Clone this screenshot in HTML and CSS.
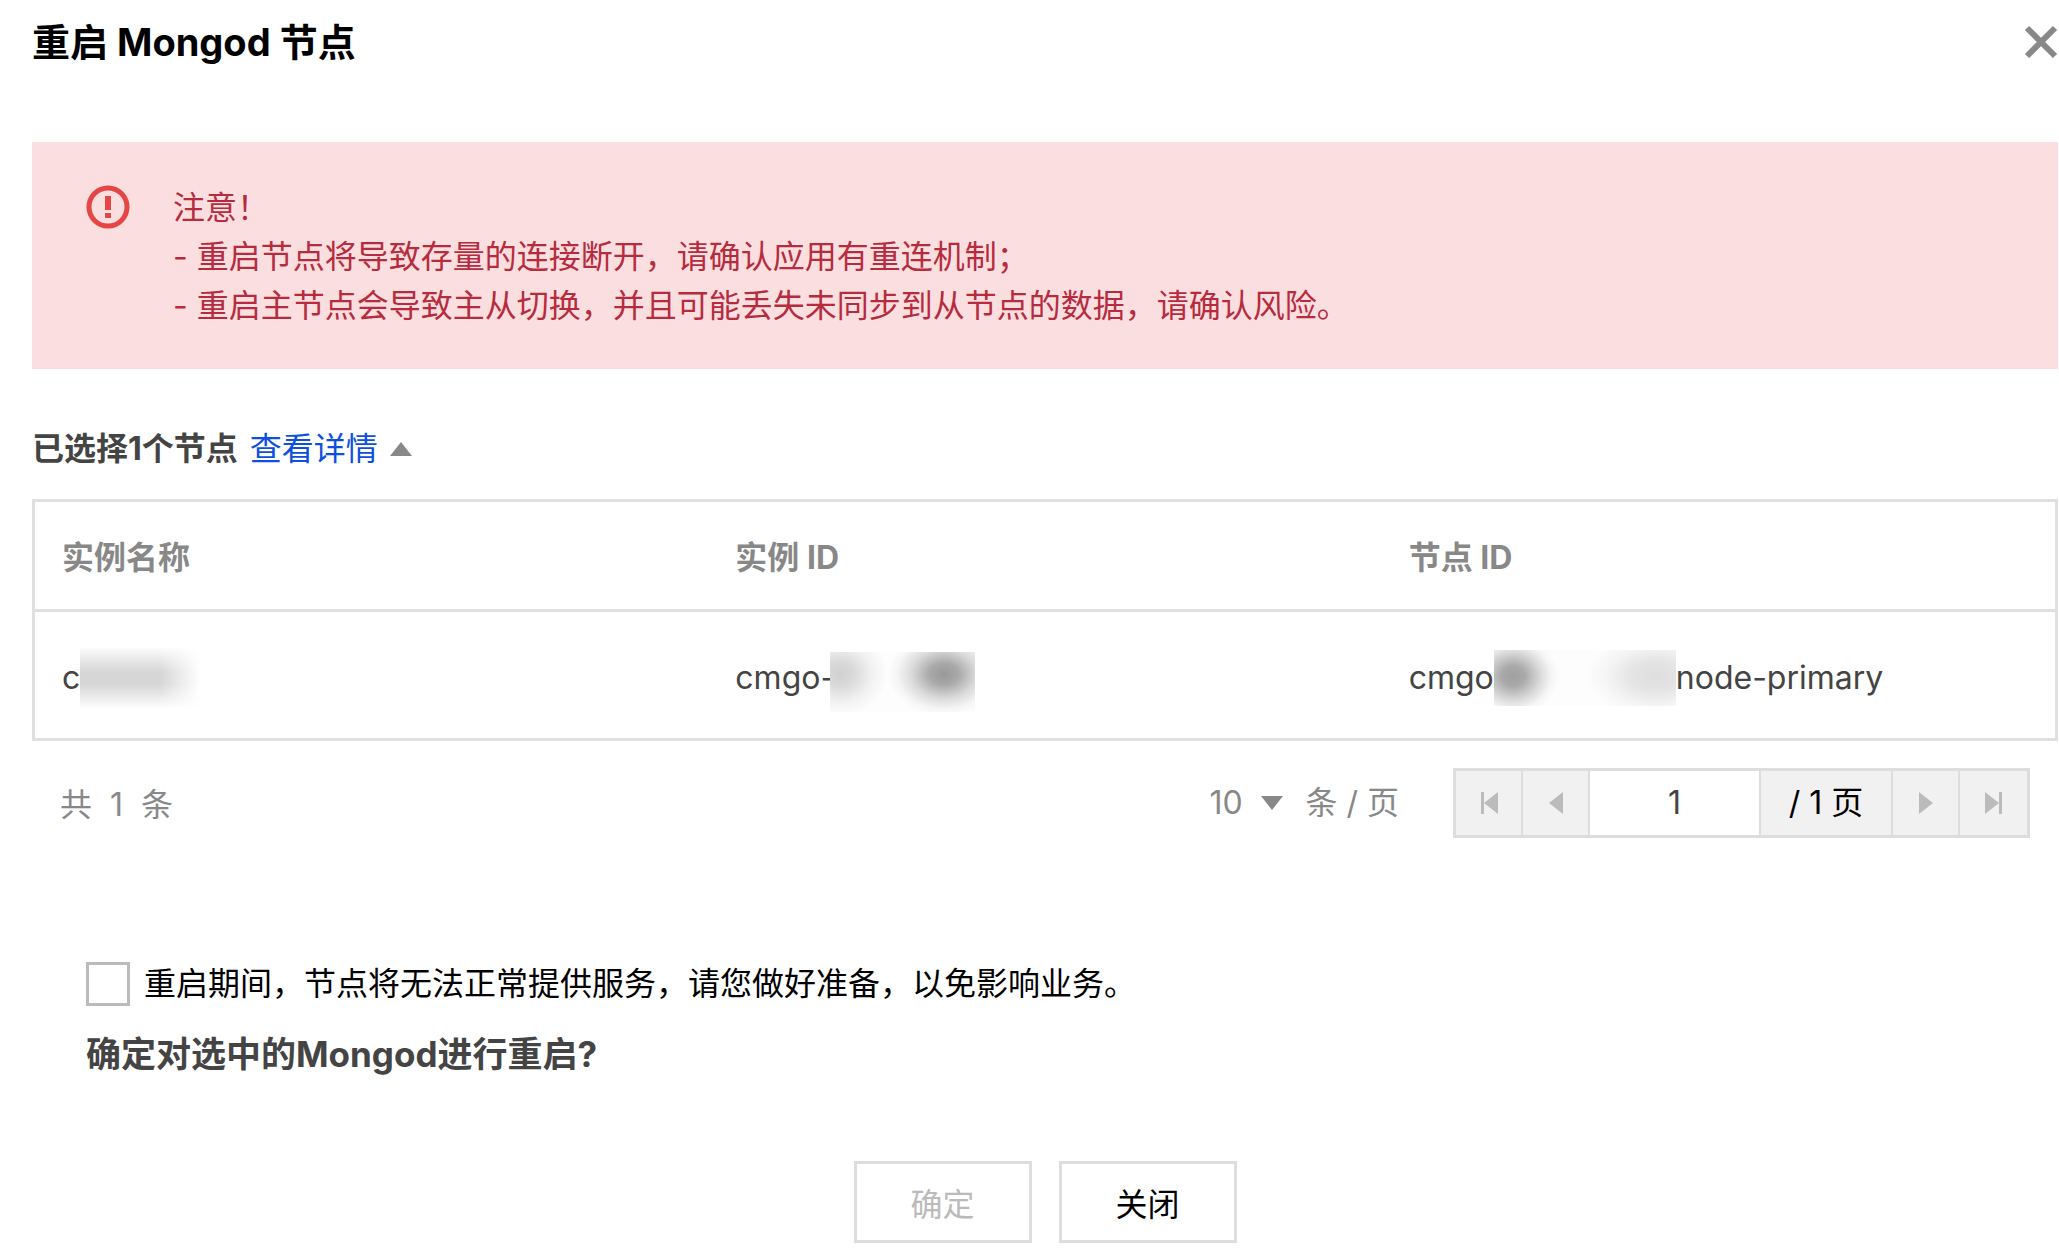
FILE: index.html
```html
<!DOCTYPE html>
<html lang="zh-CN">
<head>
    <meta charset="UTF-8">
    <meta name="viewport" content="width=device-width, initial-scale=1.0">
    <title>重启 Mongod 节点</title>
    <link rel="stylesheet" href="styles.css">
</head>
<body>
    <div class="dialog" role="dialog" aria-labelledby="dialogTitle">
        <div class="dialog-header">
            <h1 id="dialogTitle">重启 Mongod 节点</h1>
            <button class="btn-close" type="button" aria-label="关闭">
                <svg width="34" height="34" viewBox="0 0 34 34"><path d="M3 3L31 31M31 3L3 31" stroke="#888" stroke-width="6" fill="none"/></svg>
            </button>
        </div>

        <div class="alert">
            <svg class="alert-icon" width="44" height="44" viewBox="0 0 44 44">
                <circle cx="22" cy="22" r="19" fill="none" stroke="#e54545" stroke-width="5"/>
                <rect x="19" y="11" width="6" height="14" fill="#e54545"/>
                <rect x="19" y="28" width="6" height="5" fill="#e54545"/>
            </svg>
            <div>
                <p>注意！</p>
                <p>- 重启节点将导致存量的连接断开，请确认应用有重连机制；</p>
                <p>- 重启主节点会导致主从切换，并且可能丢失未同步到从节点的数据，请确认风险。</p>
            </div>
        </div>

        <div class="selected">
            <strong>已选择1个节点</strong>
            <a href="#nodeTable">查看详情</a>
            <svg width="22" height="14" viewBox="0 0 22 14"><path d="M11 0L22 14H0z" fill="#888"/></svg>
        </div>

        <table id="nodeTable">
            <thead>
                <tr>
                    <th>实例名称</th>
                    <th>实例 ID</th>
                    <th>节点 ID</th>
                </tr>
            </thead>
            <tbody>
                <tr>
                    <td><div class="cell">c<span class="mask mask-name"></span></div></td>
                    <td><div class="cell">cmgo-<span class="mask mask-instance"></span></div></td>
                    <td><div class="cell">cmgo<span class="mask mask-node"></span>node-primary</div></td>
                </tr>
            </tbody>
        </table>

        <div class="pagination">
            <div class="total">共 <span>1</span> 条</div>
            <div class="page-size">
                <select id="pageSize">
                    <option>10</option>
                    <option>20</option>
                    <option>50</option>
                </select>
                <svg width="22" height="14" viewBox="0 0 22 14"><path d="M0 0H22L11 14z" fill="#888"/></svg>
                <label for="pageSize">条 / 页</label>
            </div>
            <div class="pager">
                <button type="button" aria-label="第一页" disabled>
                    <svg width="18" height="22" viewBox="0 0 18 22"><path d="M1 0H4V22H1zM18 0V22L4 11z" fill="#bbb"/></svg>
                </button>
                <button type="button" aria-label="上一页" disabled>
                    <svg width="14" height="22" viewBox="0 0 14 22"><path d="M14 0V22L0 11z" fill="#bbb"/></svg>
                </button>
                <input type="text" value="1" aria-label="页码">
                <span class="page-count">/ 1 页</span>
                <button type="button" aria-label="下一页" disabled>
                    <svg width="14" height="22" viewBox="0 0 14 22"><path d="M0 0V22L14 11z" fill="#bbb"/></svg>
                </button>
                <button type="button" aria-label="最后一页" disabled>
                    <svg width="18" height="22" viewBox="0 0 18 22"><path d="M14 0H17V22H14zM0 0V22L14 11z" fill="#bbb"/></svg>
                </button>
            </div>
        </div>

        <div class="confirm">
            <div class="agree">
                <input type="checkbox" id="agree">
                <label for="agree">重启期间，节点将无法正常提供服务，请您做好准备，以免影响业务。</label>
            </div>
            <p class="question">确定对选中的Mongod进行重启?</p>
        </div>

        <div class="dialog-footer">
            <button class="btn" type="button" disabled>确定</button>
            <button class="btn" type="button">关闭</button>
        </div>
    </div>
</body>
</html>
```
FILE: styles.css
```css
* { box-sizing: border-box; }
body { margin: 0; background: #fff; color: #444; font-family: Inter, "Noto Sans CJK SC", sans-serif; font-size: 32px; line-height: 50px; }
h1, p { margin: 0; }
svg { display: block; flex: none; }
button, input, select { font: inherit; color: inherit; }

.dialog { padding: 0 1px 16px 32px; }
.dialog-header { display: flex; justify-content: space-between; align-items: center; height: 84px; }
.dialog-header h1 { font-size: 38px; font-weight: bold; color: #000; }
.btn-close { padding: 0; border: none; background: none; cursor: pointer; }

.alert { display: flex; gap: 43px; margin-top: 58px; padding: 41px 54px 39px; background: #fbdfe0; color: #b72b3f; line-height: 49px; }
.alert-icon { margin-top: 2px; }

.selected { display: flex; align-items: center; gap: 12px; margin-top: 55px; }
.selected strong { font-weight: bold; }
.selected a { color: #0d4fe0; text-decoration: none; }

table { width: 100%; margin-top: 25px; table-layout: fixed; border: 3px solid #e0e0e0; border-spacing: 0; }
th, td { padding: 5px 27px 0; text-align: left; }
th { height: 110px; border-bottom: 3px solid #e0e0e0; color: #888; font-weight: bold; }
td { height: 126px; }
.cell { display: flex; align-items: center; height: 60px; white-space: nowrap; }

/* blurred-out ids */
.mask { height: 60px; }
.mask-name { width: 122px; background: linear-gradient(90deg, rgba(255, 255, 255, 0) 60px, rgba(255, 255, 255, 0) 80px, #fff 120px), linear-gradient(#fbfbfb, #d6d6d6 40%, #d6d6d6 60%, #fdfdfd); }
.mask-instance { width: 145px; margin: 8px 0 0 -5px; background: radial-gradient(ellipse 56px 42px at 114px 22px, #999 0%, rgba(153, 153, 153, 0.85) 25%, rgba(153, 153, 153, 0.35) 58%, rgba(153, 153, 153, 0.08) 84%, rgba(153, 153, 153, 0) 100%), radial-gradient(ellipse 48px 42px at 10px 22px, #d0d0d0 0%, #dadada 30%, #f2f2f2 68%, #fdfdfd 100%); }
.mask-node { width: 182px; height: 56px; background: radial-gradient(ellipse 46px 40px at 19px 26px, #a0a0a0 0%, rgba(160, 160, 160, 0.9) 25%, rgba(160, 160, 160, 0.35) 62%, rgba(160, 160, 160, 0.08) 84%, rgba(160, 160, 160, 0) 100%), radial-gradient(ellipse 70px 42px at 162px 26px, #dedede 0%, #e4e4e4 35%, #f5f5f5 72%, #fdfdfd 100%); }

.pagination { display: flex; align-items: center; margin-top: 27px; padding: 0 28px; color: #888; }
.total { margin-right: auto; padding-top: 4px; }
.total span { margin: 0 9px; }
.page-size { display: flex; align-items: center; margin-right: 54px; }
.page-size select { width: 40px; margin-right: 12px; padding: 0; border: none; background: none; appearance: none; }
.page-size label { margin-left: 22px; }

.pager { display: flex; height: 70px; border: 3px solid #ddd; background: #f1f1f1; }
.pager > * { display: flex; align-items: center; justify-content: center; width: 67px; padding: 0; border: none; border-right: 2px solid #ddd; background: none; }
.pager > :last-child { border-right: none; }
.pager input { width: 171px; background: #fff; color: #444; text-align: center; }
.pager .page-count { width: 132px; color: #000; }

.confirm { margin-top: 121px; padding-left: 54px; }
.agree { display: flex; align-items: center; gap: 14px; color: #000; }
.agree input { flex: none; width: 44px; height: 44px; margin: 0; border: 3px solid #bbb; background: #fff; appearance: none; }
.agree input:checked { background: #888; }
.question { margin-top: 20px; font-size: 35px; font-weight: bold; }

.dialog-footer { display: flex; justify-content: center; gap: 27px; margin-top: 82px; }
.btn { width: 178px; height: 82px; padding: 6px 0 0; border: 3px solid #ddd; background: #fff; color: #000; cursor: pointer; }
.btn:disabled { color: #bbb; cursor: default; }
```
